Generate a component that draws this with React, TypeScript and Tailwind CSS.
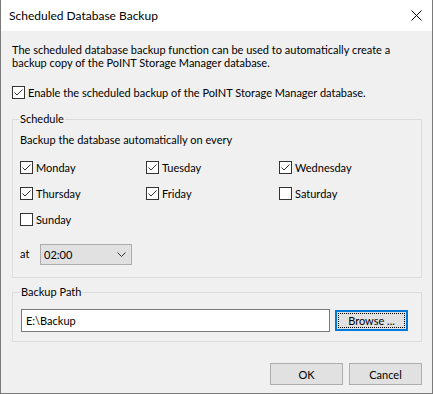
import React from 'react';

const font = { fontFamily: 'Lato, "Liberation Sans", sans-serif' };

function Check({ checked, label, className = '' }: { checked: boolean; label: string; className?: string }) {
  return (
    <div className={`flex items-center h-[13px] ${className}`}>
      <span className="w-[13px] h-[13px] bg-white border border-[#333333] flex items-center justify-center shrink-0">
        {checked && (
          <svg width="11" height="11" viewBox="0 0 11 11">
            <path d="M1.5 5.5 L4 8 L9.5 2.5" fill="none" stroke="#333333" strokeWidth="1" />
          </svg>
        )}
      </span>
      <span className="ml-[3px] leading-[13px] text-black whitespace-nowrap">{label}</span>
    </div>
  );
}

const days: [string, boolean][] = [
  ['Monday', true],
  ['Tuesday', true],
  ['Wednesday', true],
  ['Thursday', true],
  ['Friday', true],
  ['Saturday', false],
  ['Sunday', false],
];

export default function App() {
  return (
    <div style={font} className="w-[433px] h-[394px] bg-[#f0f0f0] border-x border-b border-[#7a7a7a] flex flex-col text-black text-[11px] leading-[13px] whitespace-nowrap overflow-hidden">
      {/* title bar */}
      <div className="h-[31px] bg-white flex items-center justify-between pl-[8px] pr-[10px] shrink-0">
        <span className="text-[12px]">Scheduled Database Backup</span>
        <svg width="11" height="11" viewBox="0 0 11 11">
          <path d="M0.5 0.5 L10.5 10.5 M10.5 0.5 L0.5 10.5" stroke="#000" strokeWidth="1" />
        </svg>
      </div>

      <div className="flex flex-col pt-[12px] pl-[11px] pr-[10px]">
        <p>
          The scheduled database backup function can be used to automatically create a
          <br />
          backup copy of the PoINT Storage Manager database.
        </p>

        <Check checked label="Enable the scheduled backup of the PoINT Storage Manager database." className="mt-[17px]" />

        <fieldset className="mt-[13px] border border-[#dcdcdc] pl-[7px] pb-[12px]">
          <legend className="px-[1px] ml-[-1px] leading-[14px]">Schedule</legend>
          <p className="mt-[7px]">Backup the database automatically on every</p>
          <div className="grid grid-cols-[126px_133px_1fr] gap-y-[13px] mt-[15px]">
            {days.map(([d, c]) => (
              <Check key={d} checked={c} label={d} />
            ))}
          </div>
          <div className="flex items-center mt-[18px]">
            <span className="w-[20px] mt-[-3px]">at</span>
            <div className="w-[92px] h-[21px] bg-[#e1e1e1] border border-[#adadad] flex items-center justify-between pl-[3px] pr-[5px]">
              <span>02:00</span>
              <svg width="9" height="5" viewBox="0 0 9 5">
                <path d="M0.5 0.5 L4.5 4.5 L8.5 0.5" fill="none" stroke="#333" strokeWidth="1" />
              </svg>
            </div>
          </div>
        </fieldset>

        <fieldset className="mt-[7px] border border-[#dcdcdc] pl-[8px] pr-[13px] pb-[9px]">
          <legend className="px-[1px] ml-[-1px] leading-[14px]">Backup Path</legend>
          <div className="flex items-center gap-[5px] mt-[10px]">
            <div className="w-[309px] h-[23px] bg-white border border-[#7a7a7a] flex items-center pl-[4px]">E:\Backup</div>
            <button className="w-[73px] h-[21px] bg-[#e1e1e1] border-2 border-[#0078d7] p-[1px] flex">
              <span className="flex-1 border border-dotted border-black flex items-center justify-center">Browse ...</span>
            </button>
          </div>
        </fieldset>

        <div className="flex justify-end gap-[6px] mt-[21px]">
          <button className="w-[73px] h-[22px] bg-[#e1e1e1] border border-[#adadad]">OK</button>
          <button className="w-[73px] h-[22px] bg-[#e1e1e1] border border-[#adadad]">Cancel</button>
        </div>
      </div>
    </div>
  );
}
